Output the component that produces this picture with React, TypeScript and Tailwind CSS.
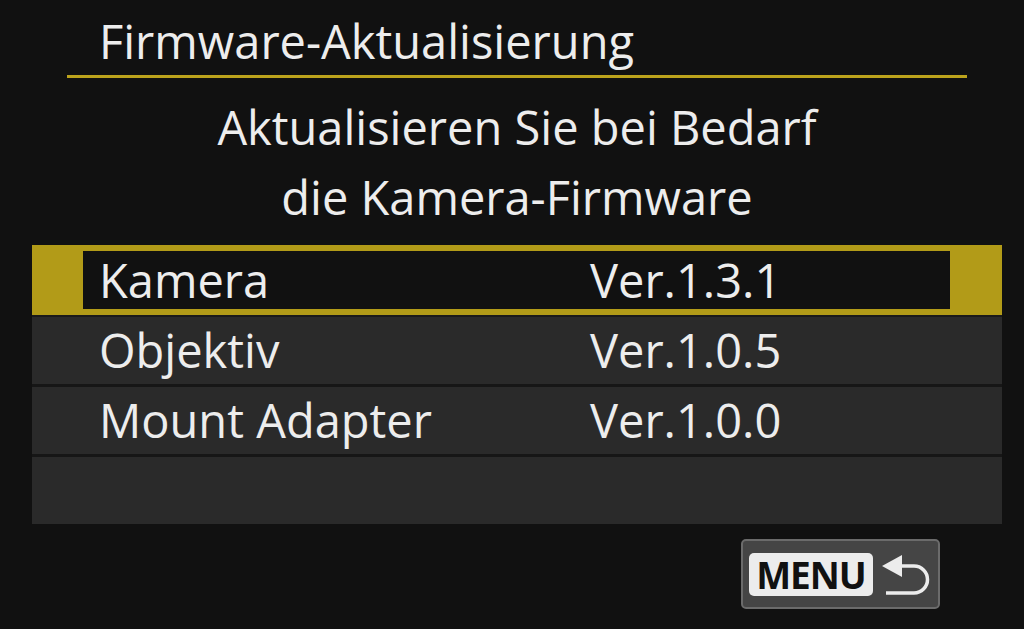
import React from "react";

const rows = [
  { name: "Objektiv", ver: "Ver.1.0.5" },
  { name: "Mount Adapter", ver: "Ver.1.0.0" },
];

export default function App() {
  return (
    <div
      className="w-[1024px] h-[629px] bg-[#111111] text-[#ededed] overflow-hidden flex flex-col"
      style={{ fontFamily: '"Open Sans", "Noto Sans", sans-serif' }}
    >
      <div className="pt-[18px] pl-[99px] text-[47px] leading-[47px]">Firmware-Aktualisierung</div>
      <div className="mt-[10px] ml-[67px] w-[900px] h-[3px] bg-[#bca31c]" />
      <div className="mt-[14px] ml-[32px] w-[970px] text-center text-[47px] leading-[70px]">
        <div>Aktualisieren Sie bei Bedarf</div>
        <div>die Kamera-Firmware</div>
      </div>
      <div className="mt-[13px] ml-[32px] w-[970px] flex flex-col">
        <div className="h-[70px] bg-[#b29b18] pl-[51px] pr-[52px] py-[6px]">
          <div className="h-[58px] bg-[#111111] flex items-center text-[47px] leading-[58px] pl-[16px]">
            <span className="w-[491px]">Kamera</span>
            <span>Ver.1.3.1</span>
          </div>
        </div>
        <div className="h-[2px] bg-[#1a1a1a]" />
        {rows.map((r) => (
          <React.Fragment key={r.name}>
            <div className="h-[67px] bg-[#2a2a2a] flex items-center text-[47px] leading-[67px] pl-[67px]">
              <span className="w-[491px]">{r.name}</span>
              <span>{r.ver}</span>
            </div>
            <div className="h-[3px] bg-[#161616]" />
          </React.Fragment>
        ))}
        <div className="h-[67px] bg-[#2a2a2a]" />
      </div>
      <div className="mt-[15px] flex justify-end pr-[84px]">
        <div className="w-[199px] h-[70px] rounded-[5px] border-2 border-[#6b6b6b] bg-[#454545] flex items-center pl-[6px]">
          <div className="w-[124px] h-[43px] rounded-[5px] bg-[#ececec] flex items-center justify-center">
            <span
              className="text-[#111111] text-[37px] font-bold leading-none tracking-[-1px]"
              style={{ fontFamily: '"Open Sans", sans-serif' }}
            >
              MENU
            </span>
          </div>
          <svg width="54" height="48" viewBox="0 0 54 48" className="ml-[6px]">
            <polygon points="3,16 23,5 23,27" fill="#ececec" />
            <path d="M21 16 H35 A13.5 13.5 0 0 1 35 43 H7" fill="none" stroke="#ececec" strokeWidth="3.5" />
          </svg>
        </div>
      </div>
    </div>
  );
}
